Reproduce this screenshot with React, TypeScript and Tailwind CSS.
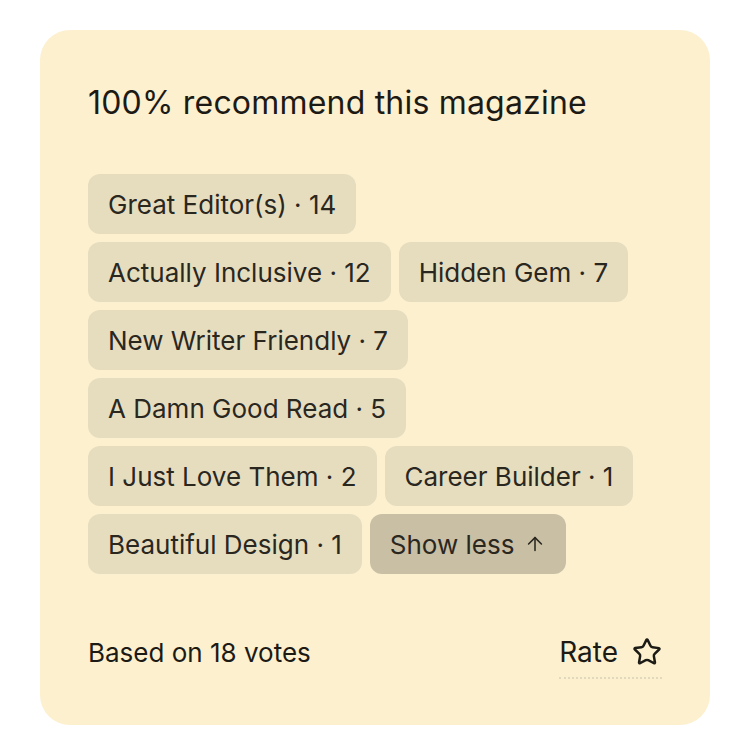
import { ArrowUp, Star } from "lucide-react";

const tags = [
    { label: "Great Editor(s)", count: 14 },
    { label: "Actually Inclusive", count: 12 },
    { label: "Hidden Gem", count: 7 },
    { label: "New Writer Friendly", count: 7 },
    { label: "A Damn Good Read", count: 5 },
    { label: "I Just Love Them", count: 2 },
    { label: "Career Builder", count: 1 },
    { label: "Beautiful Design", count: 1 },
];

export default function App() {
    return (
        <div className="min-h-screen w-full bg-white pt-[30px] pl-[40px] font-['Inter',sans-serif] text-[#1c1a15]">
            <div className="w-[670px] h-[695px] bg-[#fcf0cf] rounded-[30px] pt-[53px] px-[48px] flex flex-col">
                <h2 className="text-[32px] leading-[40px] font-normal tracking-[0.2px]">
                    100% recommend this magazine
                </h2>

                <div className="mt-[51px] flex flex-wrap gap-[8px]">
                    {tags.map((t) => (
                        <span
                            key={t.label}
                            className="h-[60px] px-[20px] flex items-center rounded-[12px] bg-[#e6ddbf] text-[26px] text-[#2a271f]"
                        >
                            {t.label} · {t.count}
                        </span>
                    ))}
                    <button className="h-[60px] pl-[20px] pr-[20px] flex items-center gap-[10px] rounded-[12px] bg-[#c9bfa5] text-[26px] text-[#2a271f]">
                        Show less
                        <ArrowUp size={22} strokeWidth={1.7} />
                    </button>
                </div>

                <div className="mt-auto mb-[52px] flex items-center justify-between">
                    <span className="text-[26px]">Based on 18 votes</span>
                    <button className="flex items-center gap-[14px] text-[28px] border-b-2 border-dotted border-[#e2d8bb] pb-[4px] -mb-[6px]">
                        Rate
                        <Star size={30} strokeWidth={2} />
                    </button>
                </div>
            </div>
        </div>
    );
}
